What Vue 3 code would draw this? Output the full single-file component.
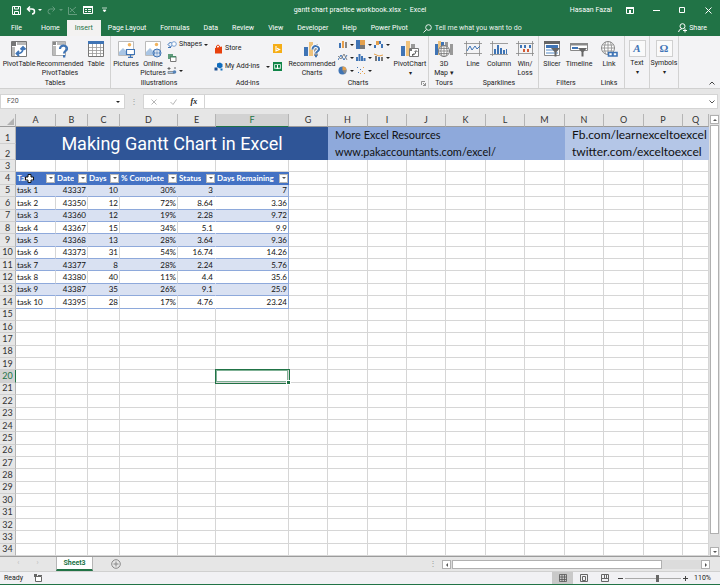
<script setup>
import { ref } from 'vue'

const tabs = ['File', 'Home', 'Insert', 'Page Layout', 'Formulas', 'Data', 'Review', 'View', 'Developer', 'Help', 'Power Pivot']
const activeTab = ref('Insert')

const groups = [
  { name: 'Tables', line: true, big: [
    { icon: 'pivot', lines: ['PivotTable'], size: 'w38' },
    { icon: 'recpivot', lines: ['Recommended', 'PivotTables'], size: 'w44' },
    { icon: 'table', lines: ['Table'], size: 'w28' },
  ] },
  { name: 'Illustrations', kind: 'shapes', big: [
    { icon: 'picture', lines: ['Pictures'], size: 'w30' },
    { icon: 'online', lines: ['Online', 'Pictures'], size: 'w24' },
  ] },
  { name: 'Add-ins', kind: 'addins', big: [] },
  { name: 'Charts', kind: 'charts', line: true, launcher: true, big: [
    { icon: 'recchart', lines: ['Recommended', 'Charts'], size: 'w48' },
  ] },
  { name: 'Tours', big: [{ icon: 'map', lines: ['3D', 'Map ▾'], size: 'w30' }] },
  { name: 'Sparklines', line: true, big: [
    { icon: 'sparkline', lines: ['Line'], size: 'w26' },
    { icon: 'sparkcolumn', lines: ['Column'], size: 'w26' },
    { icon: 'sparkwin', lines: ['Win/', 'Loss'], size: 'w26' },
  ] },
  { name: 'Filters', big: [
    { icon: 'slicer', lines: ['Slicer'], size: 'w26' },
    { icon: 'timeline', lines: ['Timeline'], size: 'w28' },
  ] },
  { name: 'Links', line: true, big: [{ icon: 'link', lines: ['Link'], size: 'w30' }] },
  { name: '', line: true, big: [{ glyph: 'A', lines: ['Text', '▾'], size: 'w24' }] },
  { name: '', line: true, big: [{ glyph: 'Ω', lines: ['Symbols', '▾'], size: 'w28' }] },
]

const chartKinds = ['c-column', 'c-tree', 'c-waterfall', 'c-line', 'c-histogram', 'c-combo', 'c-pie', 'c-scatter']

const columns = [
  ['A', 40], ['B', 32], ['C', 32], ['D', 58], ['E', 38], ['F', 73], ['G', 39], ['H', 40], ['I', 39],
  ['J', 39], ['K', 40], ['L', 39], ['M', 40], ['N', 39], ['O', 40], ['P', 39], ['Q', 26],
].map(([name, width]) => ({ name, width }))

const headings = ['Task', 'Date', 'Days', '% Complete', 'Status', 'Days Remaining']
const tasks = [
  ['task 1', 43337, 10, '30%', 3, 7],
  ['task 2', 43350, 12, '72%', 8.64, 3.36],
  ['task 3', 43360, 12, '19%', 2.28, 9.72],
  ['task 4', 43367, 15, '34%', 5.1, 9.9],
  ['task 5', 43368, 13, '28%', 3.64, 9.36],
  ['task 6', 43373, 31, '54%', 16.74, 14.26],
  ['task 7', 43377, 8, '28%', 2.24, 5.76],
  ['task 8', 43380, 40, '11%', 4.4, 35.6],
  ['task 9', 43387, 35, '26%', 9.1, 25.9],
  ['task 10', 43395, 28, '17%', 4.76, 23.24],
]
const emptyRows = Array.from({ length: 20 }, (_, i) => i + 15)
const zoom = ref(58)
</script>

<template>
  <svg class="sprite" aria-hidden="true">
    <symbol id="pivot" viewBox="0 0 18 18">
      <path d="M1.500 1.500h15v15h-15z" fill="#fff" stroke="#777" />
      <path d="M2 2h4v4H2z" fill="#777" /><path d="M7 2h9v3H7zM2 7h3v9H2z" fill="#b8b8b8" />
      <path d="M7 13.500c5 0 6-2 6-6M10.500 9.500 13 7l2.500 2.500M9 11l-2.500 2.500L9 16" fill="none" stroke="#3f74b5" stroke-width="1.800" />
    </symbol>
    <symbol id="recpivot" viewBox="0 0 18 18">
      <path d="M1.500 1.500h13v14h-13z" fill="#fff" stroke="#aaa" />
      <path d="M2 2h3v3H2z" fill="#888" /><path d="M6 2h8v3H6zM2 6h3v9H2z" fill="#bbb" />
      <path d="M9 9c0-5 7.500-4 7 0-.300 2-3 2-3 4.500" fill="none" stroke="#3f74b5" stroke-width="2.200" />
      <path d="M12 15h2.300v2.500H12z" fill="#3f74b5" />
    </symbol>
    <symbol id="table" viewBox="0 0 18 18">
      <path d="M1.500 1.500h15v15h-15z" fill="#fff" stroke="#777" />
      <path d="M1 1h16v3H1z" fill="#3f74b5" />
      <path d="M2 7.500h14M2 10.500h14M2 13.500h14M5.500 4v12M9.500 4v12M13.500 4v12" stroke="#999" fill="none" stroke-width=".8" />
    </symbol>
    <symbol id="picture" viewBox="0 0 18 18">
      <path d="M1.500 1.500h15v14h-15z" fill="#fff" stroke="#bbb" />
      <circle cx="12.500" cy="4.800" r="1.800" fill="#f2b35c" />
      <path d="M2 15V12l4-4 4 4 3-2v5z" fill="#a9c5e4" />
      <path d="M9.500 9.500h8v5h-8zM13.500 15v2M11 17.300h5" fill="#fff" stroke="#3f74b5" stroke-width="1.200" />
    </symbol>
    <symbol id="online" viewBox="0 0 18 18">
      <path d="M1.500 1.500h15v14h-15z" fill="#fff" stroke="#bbb" />
      <circle cx="12.500" cy="4.500" r="1.700" fill="#f2b35c" />
      <path d="M2 15V12l4-4 4 4v3z" fill="#a9c5e4" />
      <circle cx="13" cy="13" r="4" fill="#fff" stroke="#3f74b5" /><path d="M9 13h8M13 9v8M11 10q-1 3 0 6M15 10q1 3 0 6" fill="none" stroke="#3f74b5" stroke-width=".7" />
    </symbol>
    <symbol id="shapes" viewBox="0 0 10 8">
      <path d="M1 3.500 3.500 1 6 3.500 3.500 6z" fill="#e8f0fa" stroke="#3f74b5" /><circle cx="7" cy="3" r="2.300" fill="#fff" stroke="#7aa3d4" /><path d="M1 6.500h3" stroke="#3f74b5" />
    </symbol>
    <symbol id="smartart" viewBox="0 0 10 9">
      <path d="M1 1h5v2H3v3H1z" fill="#5f9c7c" /><path d="M3.500 3.500h5.500v5H3.500z" fill="#fff" stroke="#777" /><path d="M3 3h6v1.500H3z" fill="#468866" />
    </symbol>
    <symbol id="screenshot" viewBox="0 0 10 9">
      <path d="M1 5.500h6v2H1z" fill="#a8c4e2" stroke="#777" stroke-width=".7" /><circle cx="7.500" cy="6" r="1.800" fill="#5583b8" /><path d="M2 1v3M.500 2.500h3M8 1v2" stroke="#666" />
    </symbol>
    <symbol id="store" viewBox="0 0 9 10"><path d="M1 4 8 2.500V9.500H1z" fill="#e8400c" /><path d="M2.500 4V2q1.500-2 3 0v1" fill="none" stroke="#e8400c" /></symbol>
    <symbol id="myaddins" viewBox="0 0 9 9"><path d="M3 1.500 6 .500 8.500 2v3L6 6.500 3 5z" fill="#0f6cbd" /><path d="M.500 5.500h3v3h-3z" fill="#1d4f91" /><path d="M6.500 6.500h2v2h-2z" fill="#0f6cbd" /></symbol>
    <symbol id="bing" viewBox="0 0 9 9"><path d="M0 0h9v9H0z" fill="#f5ae17" /><path d="M3 2v5l3.500-1.500L4 4.300" fill="none" stroke="#fff" stroke-width="1.100" /></symbol>
    <symbol id="people" viewBox="0 0 9 9"><path d="M0 0h9v9H0z" fill="#108548" /><path d="M1.500 2.500h6v4h-6z" fill="none" stroke="#fff" stroke-width=".7" /><path d="M4.500 3v4M3 5.500 4.500 7 6 5.500" stroke="#fff" fill="none" /></symbol>
    <symbol id="recchart" viewBox="0 0 18 18">
      <path d="M1 7h4v9H1z" fill="#3f74b5" /><path d="M6 2h4v14H6z" fill="#efc27b" /><path d="M11 4h4v12h-4z" fill="#999" />
      <path d="M9.500 9.500c0-5 7-4 6.500 0-.300 2-3 2-3 4" fill="none" stroke="#fff" stroke-width="4" /><path d="M9.500 9.500c0-5 7-4 6.500 0-.300 2-3 2-3 4M13 15v2.300" fill="none" stroke="#3f74b5" stroke-width="2" />
    </symbol>
    <symbol id="pivotchart" viewBox="0 0 18 18">
      <path d="M0 6h4v10H0z" fill="#3f74b5" /><path d="M5 1h4v15H5z" fill="#efc27b" /><path d="M10 4h4v12h-4z" fill="#999" />
      <path d="M8.500 8.500h9v8h-9z" fill="#fff" stroke="#777" /><path d="M9 9h2v2H9z" fill="#777" /><path d="M11 15q4 0 4-4M13.500 12 15 10.500l1.500 1.500M12.500 13.500 11 15l1.500 1" fill="none" stroke="#666" />
    </symbol>
    <symbol id="map" viewBox="0 0 18 18">
      <path d="M0 4h3v11H0zM6 2h3v13H6z" fill="#3f74b5" /><path d="M3 1h3v14H3z" fill="#efc27b" /><path d="M10 2h3v13h-3zM15 4h3v11h-3z" fill="#999" />
      <circle cx="9" cy="11" r="5.500" fill="#fff" stroke="#777" /><path d="M3.500 11h11M9 5.500v11M4.500 8.500h9M4.500 13.500h9M7 6q-2.500 5 0 10M11 6q2.500 5 0 10" fill="none" stroke="#777" stroke-width=".8" />
    </symbol>
    <symbol id="sparkline" viewBox="0 0 18 18"><path d="M0 3.500h18M0 13.500h18M2.500 1v15M15.500 1v15" stroke="#888" fill="none" stroke-width=".8" /><path d="M3 11 6 6l2 4 3-4 2 3 3-3" fill="none" stroke="#3f74b5" /></symbol>
    <symbol id="sparkcolumn" viewBox="0 0 18 18"><path d="M0 3.500h18M0 14.500h18M2.500 1v15" stroke="#888" fill="none" stroke-width=".8" /><path d="M4 9h2v5H4zM7 5h2v9H7zM10 8h2v6h-2zM13 10h2v4h-2zM16 9h1v5h-1z" fill="#3f74b5" /></symbol>
    <symbol id="sparkwin" viewBox="0 0 18 18"><path d="M0 3.500h18M0 13.500h18M2.500 1v15M16.500 1v15" stroke="#888" fill="none" stroke-width=".8" /><path d="M4 5h2v3H4zM8 5h2v3H8zM13 5h2v3h-2z" fill="#3f74b5" /><path d="M7 9h2v3H7zM11 9h2v3h-2z" fill="#d35a34" /></symbol>
    <symbol id="slicer" viewBox="0 0 18 18"><path d="M1.500 1.500h15v14h-15z" fill="#fff" stroke="#888" /><path d="M1 1h16v3H1z" fill="#666" /><path d="M3 5h12v3H3z" fill="#3f74b5" /><path d="M3 9h12v2H3zM3 12h12v2H3z" fill="#a9c5e4" /><path d="M8 8h9l-3.500 4v4.500h-2V12z" fill="#666" /></symbol>
    <symbol id="timeline" viewBox="0 0 18 18"><path d="M.500 3.500h17v7H.5z" fill="#fff" stroke="#888" /><path d="M0 3h18v2.500H0z" fill="#888" /><path d="M2 7h6v2H2z" fill="#3f74b5" /><path d="M8 8h9l-3.500 4v4.500h-2V12z" fill="#666" /></symbol>
    <symbol id="link" viewBox="0 0 18 18"><circle cx="8" cy="8" r="6.500" fill="#fff" stroke="#888" /><path d="M1.500 8h13M8 1.500v13M2.500 5h11M2.500 11h11M5.500 2q-2.500 6 0 12M10.500 2q2.500 6 0 12" fill="none" stroke="#888" stroke-width=".8" /><path d="M8.500 12.500h4.500v3.500H8.500zM12.500 12.500H17v3.500h-4.500z" fill="#fff" stroke="#3f74b5" stroke-width="1.600" /></symbol>
    <symbol id="c-column" viewBox="0 0 10 9"><path d="M1 3h2v5H1z" fill="#3f74b5" /><path d="M4 1h2v7H4z" fill="#e8a04d" /><path d="M7 2h2v6H7z" fill="#888" /></symbol>
    <symbol id="c-tree" viewBox="0 0 10 9"><path d="M0 0h4v9H0z" fill="#3f74b5" /><path d="M4 0h5v5H4z" fill="#e5a04b" /><path d="M4 5h5v4H4z" fill="#777" /></symbol>
    <symbol id="c-waterfall" viewBox="0 0 10 9"><path d="M0 5h2v3H0z" fill="#3f74b5" /><path d="M2 1h3v4H2z" fill="#e5a04b" /><path d="M5 1h2v3H5zM7 4h2v4H7z" fill="#3f74b5" /></symbol>
    <symbol id="c-line" viewBox="0 0 10 9"><path d="M0 7 3 2l3 5 3-5" fill="none" stroke="#3f74b5" /><path d="M0 3 3 6l3-5 3 6" fill="none" stroke="#888" /></symbol>
    <symbol id="c-histogram" viewBox="0 0 10 9"><path d="M0 4h2v4H0zM2.500 1h2v7h-2zM5 3h2v5H5zM7.500 5h2v3h-2z" fill="#3f74b5" /></symbol>
    <symbol id="c-combo" viewBox="0 0 10 9"><path d="M1 3h2v5H1zM7 4h2v4H7z" fill="#777" /><path d="M4 4h2v4H4z" fill="#3f74b5" /><path d="M0 1 5 3l4-1" fill="none" stroke="#e5a04b" /></symbol>
    <symbol id="c-pie" viewBox="0 0 10 9"><circle cx="4.500" cy="4.500" r="4" fill="#3f74b5" /><path d="M4.500 4.500v-4a4 4 0 0 1 4 4z" fill="#e5a04b" /><path d="M4.500 4.500h4a4 4 0 0 1-2 3.400z" fill="#888" /></symbol>
    <symbol id="c-scatter" viewBox="0 0 10 9"><path d="M1 1h1v1H1zM4 3h1v1H4zM2 6h1v1H2z" fill="#3f74b5" /><path d="M7 1h1v1H7zM6 5h1v1H6zM8 7h1v1H8zM4 7h1v1H4z" fill="#e5a04b" /></symbol>
  </svg>

  <div class="app">
    <header class="top">
      <div class="titlebar">
        <div class="quick">
          <button aria-label="Save"><svg width="9" height="9"><path d="M.5.500h8v8h-8zM2.500.500v2.500h4V.5M2.500 8.500v-3h4v3" fill="none" stroke="#fff" /></svg></button>
          <button aria-label="Undo" class="undo"><svg width="10" height="9"><path d="M4 .500 1.500 3 4 5.500M1.500 3H6q2.500 0 2.500 2.500T6 8" fill="none" stroke="#fff" stroke-width="1.500" /></svg><i class="caret"></i></button>
          <button aria-label="Redo" class="undo dim"><svg width="10" height="9"><path d="M5.500.500 8 3 5.500 5.500M8 3H3.500Q1 3 1 5.500T3.500 8" fill="none" stroke="#fff" /></svg><i class="caret"></i></button>
          <button aria-label="Chart" class="dim"><svg width="10" height="9"><path d="M.500 1v7.500H9M2 6l6-5M2 2l5 5" fill="none" stroke="#fff" /></svg></button>
          <button aria-label="Form"><svg width="10" height="8"><path d="M.5.500h9v7h-9z" fill="none" stroke="#fff" /><path d="M0 0h10v2H0zM2 3h2v1H2zM5 3h3v1H5zM2 5h2v1H2zM5 5h3v1H5z" fill="#fff" /></svg></button>
          <button aria-label="Customize toolbar" class="more"><svg width="5" height="7"><path d="M0 1h5M1 3l1.500 2L4 3z" fill="#fff" stroke="#fff" stroke-width=".7" /></svg></button>
        </div>
        <span class="doc">gantt chart practice workbook.xlsx &nbsp;-&nbsp; Excel</span>
        <div class="win">
          <span>Hasaan Fazal</span>
          <div class="winkeys">
            <button aria-label="Ribbon options"><svg width="8" height="7"><path d="M.5.500h7v6h-7z" fill="none" stroke="#fff" /><path d="M0 0h8v2H0zM3 3h2v3H3z" fill="#fff" /></svg></button>
            <button aria-label="Minimize"><svg width="7" height="7"><path d="M0 3.500h7" stroke="#fff" /></svg></button>
            <button aria-label="Maximize"><svg width="7" height="7"><path d="M.5.500h5v5h-5z" fill="none" stroke="#fff" /></svg></button>
            <button aria-label="Close"><svg width="7" height="7"><path d="M.5.500l6 6M6.500.500l-6 6" stroke="#fff" /></svg></button>
          </div>
        </div>
      </div>
      <nav class="tabs">
        <button v-for="t in tabs" :key="t" :class="{ active: t === activeTab }" @click="activeTab = t">{{ t }}</button>
        <button class="tell"><svg width="9" height="9"><circle cx="5.500" cy="3.500" r="2.800" fill="none" stroke="#fff" /><path d="M3.500 5.500.500 8.500" stroke="#fff" /></svg>Tell me what you want to do</button>
        <button class="share"><svg width="9" height="10"><circle cx="4.500" cy="3.200" r="2.500" fill="none" stroke="#fff" /><path d="M.500 9q.5-3 3.500-3.300M7 5.500v4M5 7.500h4" fill="none" stroke="#fff" /></svg>Share</button>
      </nav>
    </header>

    <section class="ribbon">
      <div v-for="(g, gi) in groups" :key="gi" class="group" :class="{ line: g.line }">
        <div class="tools">
          <button v-for="b in g.big" :key="b.lines[0]" class="big" :class="b.size">
            <span v-if="b.glyph" class="glyph" :class="{ slant: b.glyph === 'A' }">{{ b.glyph }}</span>
            <svg v-else width="18" height="18"><use :href="'#' + b.icon" /></svg>
            <span v-for="l in b.lines" :key="l" :class="{ arrow: l === '▾' }">{{ l }}</span>
          </button>
          <div v-if="g.kind === 'shapes'" class="stack">
            <button><svg width="10" height="8"><use href="#shapes" /></svg>Shapes<i class="caret"></i></button>
            <button aria-label="SmartArt"><svg width="10" height="9"><use href="#smartart" /></svg></button>
            <button aria-label="Screenshot"><svg width="10" height="9"><use href="#screenshot" /></svg><i class="caret"></i></button>
          </div>
          <template v-if="g.kind === 'addins'">
            <div class="stack addins">
              <button><svg width="9" height="10"><use href="#store" /></svg>Store</button>
              <button><svg width="9" height="9"><use href="#myaddins" /></svg>My Add-ins<i class="caret far"></i></button>
            </div>
            <div class="stack addins tiles">
              <button aria-label="Bing Maps"><svg width="9" height="9"><use href="#bing" /></svg></button>
              <button aria-label="People Graph"><svg width="9" height="9"><use href="#people" /></svg></button>
            </div>
          </template>
          <template v-if="g.kind === 'charts'">
            <div class="kinds">
              <button v-for="c in chartKinds" :key="c" :aria-label="c"><svg width="10" height="9"><use :href="'#' + c" /></svg><i class="caret"></i></button>
            </div>
            <button class="big w36"><svg width="18" height="18"><use href="#pivotchart" /></svg><span>PivotChart</span><span class="arrow">▾</span></button>
          </template>
        </div>
        <div class="caption">{{ g.name }}<svg v-if="g.launcher" class="launch" width="5" height="5"><path d="M.500 4V.5H4M2 2l2.500 2.500M4.500 2v2.500H2" fill="none" stroke="#777" stroke-width=".8" /></svg></div>
      </div>
      <button class="collapse" aria-label="Collapse ribbon"><svg width="6" height="4"><path d="M.500 3.500 3 1l2.500 2.500" fill="none" stroke="#444" /></svg></button>
    </section>

    <section class="formula">
      <div class="namebox"><input aria-label="Name box" value="F20"><i class="caret"></i></div>
      <span class="dots">⋮</span>
      <div class="fx">
        <button aria-label="Cancel"><svg width="6" height="6"><path d="M.5.500l5 5M5.500.500l-5 5" stroke="#b5b5b5" /></svg></button>
        <button aria-label="Enter"><svg width="7" height="6"><path d="M.500 3 3 5.500 6.500.5" fill="none" stroke="#b5b5b5" /></svg></button>
        <button class="fn">fx</button>
      </div>
      <div class="entry"><input aria-label="Formula bar"><svg width="6" height="4"><path d="M.5.500 3 3 5.500.5" fill="none" stroke="#555" /></svg></div>
    </section>

    <main class="work">
      <div class="sheet">
        <table>
          <colgroup>
            <col class="rowcol">
            <col v-for="c in columns" :key="c.name" :style="{ width: c.width + 'px' }">
          </colgroup>
          <thead>
            <tr>
              <th class="corner"><svg width="7" height="7"><path d="M7 0v7H0z" fill="#b2b2b2" /></svg></th>
              <th v-for="c in columns" :key="c.name" :class="{ sel: c.name === 'F' }">{{ c.name }}</th>
            </tr>
          </thead>
          <tbody>
            <tr class="banner">
              <th>1</th>
              <td colspan="7" rowspan="2" class="title">Making Gantt Chart in Excel</td>
              <td colspan="6" class="mid">More Excel Resources</td>
              <td colspan="4" class="light">Fb.com/learnexceltoexcel</td>
            </tr>
            <tr class="banner">
              <th>2</th>
              <td colspan="6" class="mid">www.pakaccountants.com/excel/</td>
              <td colspan="4" class="light">twitter.com/exceltoexcel</td>
            </tr>
            <tr><th>3</th><td v-for="c in columns" :key="c.name"></td></tr>
            <tr class="heads">
              <th>4</th>
              <td v-for="(h, i) in headings" :key="h">
                <div class="head"><span>{{ h }}</span><button :aria-label="'Filter ' + h"><i class="caret"></i></button></div>
                <svg v-if="i === 0" class="pointer" width="9" height="9"><path d="M3 .500h3V3h2.500v3H6v2.500H3V6H.500V3H3z" fill="#fff" stroke="#111" /></svg>
              </td>
              <td v-for="c in columns.slice(6)" :key="c.name"></td>
            </tr>
            <tr v-for="(t, r) in tasks" :key="t[0]" class="task" :class="{ band: r % 2 === 0 }">
              <th>{{ r + 5 }}</th>
              <td v-for="(v, i) in t" :key="i" class="val" :class="{ last: i === 5 }">{{ v }}</td>
              <td v-for="c in columns.slice(6)" :key="c.name"></td>
            </tr>
            <tr v-for="n in emptyRows" :key="n">
              <th :class="{ sel: n === 20 }">{{ n }}</th>
              <td v-for="c in columns" :key="c.name" :class="{ cursor: n === 20 && c.name === 'F' }"></td>
            </tr>
          </tbody>
        </table>
      </div>
      <div class="vscroll">
        <button aria-label="Scroll up"><i class="caret up"></i></button>
        <div class="thumb"></div>
        <div class="rest"></div>
        <button aria-label="Scroll down"><i class="caret"></i></button>
      </div>
    </main>

    <div class="sheetbar">
      <span class="navs"><i>‹</i><i>›</i></span>
      <button class="sheettab">Sheet3</button>
      <button class="add" aria-label="New sheet"><svg width="10" height="10"><circle cx="5" cy="5" r="4.300" fill="none" stroke="#888" /><path d="M5 2.500v5M2.500 5h5" stroke="#888" /></svg></button>
      <span class="dots end">⋮</span>
      <div class="hscroll">
        <button aria-label="Scroll left"><i class="caret left"></i></button>
        <div class="thumb"></div>
        <div class="rest"></div>
        <button aria-label="Scroll right"><i class="caret right"></i></button>
      </div>
    </div>

    <footer class="status">
      <span>Ready</span>
      <svg class="macro" width="8" height="8"><path d="M1.500 2.500h6v5h-6z" fill="#fff" stroke="#666" /><path d="M0 0h3v3H0zM4 1h4v1H4z" fill="#666" /></svg>
      <div class="views">
        <button class="on" aria-label="Normal"><svg width="8" height="8"><path d="M.5.500h7v7h-7zM.500 3h7M.500 5.500h7M3 .500v7M5.500.500v7" fill="none" stroke="#555" stroke-width=".8" /></svg></button>
        <button aria-label="Page layout"><svg width="8" height="8"><path d="M.5.500h7v7h-7zM2.500 2.500h3v4h-3z" fill="none" stroke="#666" /></svg></button>
        <button aria-label="Page break"><svg width="8" height="8"><path d="M.5.500h7v7h-7zM3.500.500v4M5.500.500v4M.500 4.500h7" fill="none" stroke="#666" /></svg></button>
      </div>
      <div class="zoomer">
        <button aria-label="Zoom out"><svg width="5" height="5"><path d="M0 2.500h5" stroke="#444" /></svg></button>
        <input v-model="zoom" type="range" min="0" max="100" aria-label="Zoom">
        <button aria-label="Zoom in"><svg width="5" height="5"><path d="M0 2.500h5M2.500 0v5" stroke="#444" /></svg></button>
        <span class="pct">110%</span>
      </div>
    </footer>
  </div>
</template>

<style>
body { margin: 0; }
</style>

<style scoped>
* { box-sizing: border-box; }
.sprite { display: none; }
.app { display: flex; flex-direction: column; height: 100vh; min-height: 540px; font: 7px/9px Roboto, "Open Sans", sans-serif; color: #222; background: #e6e6e6; overflow: hidden; }
button { padding: 0; border: 0; background: none; font: inherit; color: inherit; display: flex; align-items: center; justify-content: center; white-space: nowrap; }
svg { display: block; flex: none; }
.caret { flex: none; width: 0; height: 0; border: 2px solid transparent; border-top-color: currentColor; border-bottom: 0; }
.caret.up { border: 2px solid transparent; border-bottom-color: currentColor; border-top: 0; }
.caret.left { border: 2px solid transparent; border-right-color: currentColor; border-left: 0; }
.caret.right { border: 2px solid transparent; border-left-color: currentColor; border-right: 0; }

.top { background: #217346; color: #fff; }
.titlebar { display: grid; grid-template-columns: 1fr auto 1fr; align-items: center; height: 20px; }
.quick { display: flex; align-items: center; gap: 5px; padding-left: 12px; }
.quick .undo { gap: 2px; }
.quick .more { padding-left: 4px; }
.dim { opacity: .3; }
.doc { white-space: nowrap; }
.win { display: flex; align-items: center; justify-content: flex-end; gap: 14px; padding-right: 8px; }
.winkeys { display: flex; gap: 19px; }
.win span { white-space: nowrap; }
.tabs { display: flex; height: 16px; padding-left: 1px; }
.tabs button { padding: 0 7px; }
.tabs button:first-child { padding: 0 12px 0 10px; }
.tabs .active { background: #f3f2f1; color: #217346; padding: 0 8px; }
.tabs .tell { gap: 3px; padding: 0 8px; opacity: .9; }
.tabs .share { margin-left: auto; gap: 2px; padding-right: 13px; }

.ribbon { display: flex; height: 53px; background: #f3f3f5; border-bottom: 1px solid #d0d0d0; }
.group { display: flex; flex-direction: column; padding: 4px 0 0; position: relative; flex: none; border-right: 1px solid transparent; background-clip: padding-box; }
.group.line { border-right-color: #d2d2d2; }
.tools { display: flex; flex: 1; align-items: flex-start; }
.big { flex-direction: column; justify-content: flex-start; }
.big svg { margin-bottom: 2px; }
.arrow { font-size: 6px; line-height: 8px; }
.glyph { width: 17px; height: 17px; margin-bottom: 2px; border: 1px solid #d0d0d0; background: #fafafa; color: #3f74b5; font: bold 11px/15px "Liberation Serif", serif; text-align: center; }
.slant { font-style: italic; }
.w24 { width: 24px; } .w26 { width: 26px; } .w28 { width: 28px; } .w30 { width: 30px; }
.w36 { width: 36px; } .w38 { width: 38px; } .w44 { width: 44px; } .w48 { width: 48px; }
.stack { display: flex; flex-direction: column; gap: 4px; padding-left: 2px; width: 42px; }
.stack button { justify-content: flex-start; gap: 2px; height: 9px; }
.addins { width: 60px; gap: 9px; padding: 4px 0 0 6px; }
.far { margin-left: 4px; }
.tiles { width: 19px; padding-left: 5px; }
.kinds { display: grid; grid-template-columns: repeat(3, 18px); gap: 4px 0; padding-left: 2px; }
.kinds button { gap: 2px; justify-content: flex-start; height: 9px; }
.caption { height: 9px; text-align: center; }
.launch { position: absolute; right: 2px; bottom: 2px; }
.collapse { margin-left: auto; align-self: flex-end; padding: 0 5px 3px; }

.formula { display: flex; align-items: center; height: 25px; padding-right: 2px; }
.namebox { display: flex; align-items: center; width: 125px; height: 15px; padding: 0 4px 0 1px; background: #fff; border: 1px solid #d4d4d4; }
input { min-width: 0; border: 0; padding: 0 5px; flex: 1; font: inherit; color: #555; outline: 0; background: none; }
.dots { width: 18px; text-align: center; color: #999; font-size: 8px; }
.fx { display: flex; align-items: center; justify-content: space-around; width: 62px; height: 15px; background: #fff; border: 1px solid #d4d4d4; }
.fn { font: italic bold 8px/9px "Liberation Serif", serif; }
.entry { display: flex; align-items: center; flex: 1; height: 15px; padding-right: 2px; background: #fff; border: 1px solid #d4d4d4; border-left: 0; }

.work { display: flex; flex: 1; min-height: 0; }
.sheet { flex: 1; min-width: 0; border-right: 1px solid #9b9b9b; }
table { width: 100%; height: 100%; table-layout: fixed; border-collapse: separate; border-spacing: 0; background: #fff; font: 8px/10px Lato, "Open Sans", sans-serif; color: #111; }
.rowcol { width: 16px; }
th, td { height: 12px; padding: 0; border: 0 solid #d6d6d6; border-width: 0 1px 1px 0; white-space: nowrap; }
th { font-weight: 400; font-size: 9px; background: #e6e6e6; color: #333; }
thead th { height: 13px; border-right-color: #b5b5b5; border-bottom-color: #9b9b9b; }
tbody th { border-right-color: #b5b5b5; border-bottom-color: #cfcfcf; }
thead .corner { padding: 2px 2px 0 7px; }
th.sel { background: #d2d2d2; color: #217346; }
thead .sel { border-bottom-color: #217346; }
tbody .sel { border-right-color: #217346; }
.banner th, .banner td { height: 16px; }
.banner td { border: 0; font-size: 11px; line-height: 14px; padding-left: 7px; }
.banner th { vertical-align: bottom; }
.banner .title { background: #2f5597; color: #fff; font: 18px/24px Roboto, sans-serif; text-align: center; padding: 0; }
.mid { background: #8ea9db; }
.banner .light { background: #b4c6e7; font-size: 12px; }
.heads td { position: relative; }
.heads td:nth-child(-n+7) { background: #4472c4; color: #fff; font-weight: 700; border-color: #4472c4; }
.head { display: flex; align-items: center; justify-content: space-between; padding-left: 1px; height: 11px; overflow: hidden; }
.head span { overflow: hidden; }
.head button { width: 9px; height: 9px; background: #fff; border: 1px solid #b8b8b8; color: #555; flex: none; }
.pointer { position: absolute; left: 9px; top: 2px; }
.val { text-align: right; padding-right: 1px; border-bottom-color: #8ea9db; }
.val:nth-child(2) { text-align: left; padding-left: 1px; }
.val:nth-child(6) { border-right-color: transparent; padding-right: 2px; }
.last { border-right-color: #8ea9db; }
.band .val { background: #d9e1f2; border-right-color: #d9e1f2; }
.band .last { border-right-color: #8ea9db; }
.cursor { position: relative; outline: 1px solid #217346; box-shadow: inset 0 0 0 1px #7fb195; }
.cursor::after { content: ""; position: absolute; right: -2px; bottom: -2px; width: 3px; height: 3px; background: #217346; outline: 1px solid #fff; }

.vscroll { display: flex; flex-direction: column; width: 11px; padding: 1px 1px 0; gap: 1px; background: #e0e0e0; }
.vscroll button, .hscroll button { width: 9px; height: 9px; flex: none; background: #fff; border: 1px solid #b0b0b0; color: #555; }
.thumb { background: #fff; border: 1px solid #b0b0b0; }
.vscroll .thumb { flex: 36; }
.vscroll .rest { flex: 1; }

.sheetbar { display: flex; align-items: flex-start; height: 16px; border-top: 1px solid #9b9b9b; border-bottom: 1px solid #d0d0d0; }
.navs { display: flex; justify-content: space-evenly; width: 56px; padding-top: 2px; color: #bbb; }
.navs i { font-style: normal; }
.sheettab { width: 37px; height: 14px; background: #fff; border: 1px solid #b5b5b5; border-top: 0; border-bottom: 2px solid #217346; color: #217346; font-weight: 700; }
.add { margin: 2px 0 0 18px; }
.end { margin: 2px 0 0 auto; }
.hscroll { display: flex; gap: 1px; width: 268px; height: 9px; margin: 3px 10px 0 0; background: #dcdcdc; }
.hscroll .thumb { flex: 17; }
.hscroll .rest { flex: 3; }

.status { display: flex; align-items: center; height: 13px; padding-left: 4px; background: #f1f1f4; border-bottom: 1px solid #217346; }
.macro { margin-left: 11px; }
.views { display: flex; margin-left: auto; height: 100%; }
.views button { width: 21px; }
.views .on { background: #c9c9c9; }
.zoomer { display: flex; align-items: center; gap: 2px; padding: 0 9px 0 3px; }
.pct { margin-left: 4px; }
input[type="range"] { appearance: none; flex: none; width: 56px; height: 8px; margin: 0; padding: 0; background: linear-gradient(#aaa, #aaa) center / 100% 1px no-repeat; }
input[type="range"]::-webkit-slider-thumb { appearance: none; width: 3px; height: 7px; background: #666; }
</style>
